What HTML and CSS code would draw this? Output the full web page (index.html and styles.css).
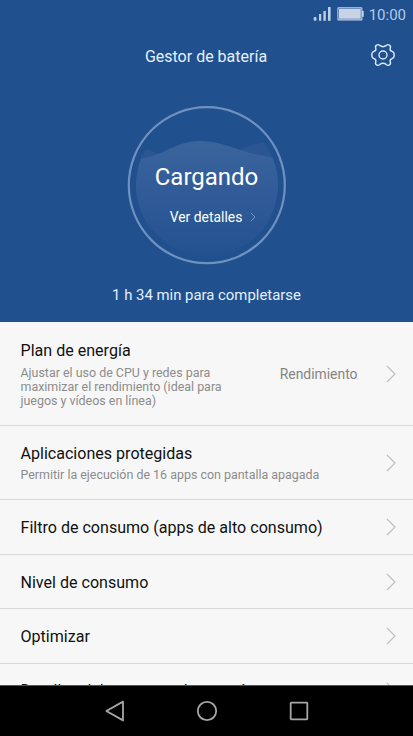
FILE: index.html
```html
<!DOCTYPE html>
<html lang="es">
<head>
    <meta charset="UTF-8">
    <meta name="viewport" content="width=device-width, initial-scale=1.0">
    <title>Gestor de batería</title>
    <link rel="stylesheet" href="styles.css">
</head>
<body>
    <div class="phone">
        <header class="header">
            <div class="status-bar">
                <svg class="signal" width="18" height="14" viewBox="0 0 18 14" fill="#bccde6">
                    <rect x="0.7" y="10" width="2.8" height="3.8" rx="1"/>
                    <rect x="6" y="7" width="2.2" height="6.8"/>
                    <rect x="10.4" y="4" width="2.4" height="9.8"/>
                    <rect x="15" y="0" width="2.6" height="13.8"/>
                </svg>
                <svg class="battery" width="27" height="14" viewBox="0 0 27 14">
                    <rect x="0.9" y="0.9" width="24" height="12" rx="0.5" fill="none" stroke="#c3d2e9" stroke-width="1.1"/>
                    <rect x="2" y="2" width="21.8" height="9.8" fill="#c8d3e8"/>
                    <rect x="25" y="4" width="1.7" height="5.8" fill="#c3d2e9"/>
                </svg>
                <span class="time">10:00</span>
            </div>
            <div class="title-bar">
                <h1>Gestor de batería</h1>
                <svg class="gear" width="26" height="26" viewBox="-13 -13 26 26" fill="none" stroke="#d7e8fb" stroke-width="1.4" stroke-linejoin="round">
                    <path d="M-3.4 -9.6 Q-4.6 -11 -6.4 -9.9 Q-8.2 -8.8 -7.2 -6.9 Q-6.6 -4.3 -9 -3.7 Q-11.2 -3 -11.2 0 Q-11.2 3 -9 3.7 Q-6.6 4.3 -7.2 6.9 Q-8.2 8.8 -6.4 9.9 Q-4.6 11 -3.4 9.6 Q0 7 3.4 9.6 Q4.6 11 6.4 9.9 Q8.2 8.8 7.2 6.9 Q6.6 4.3 9 3.7 Q11.2 3 11.2 0 Q11.2 -3 9 -3.7 Q6.6 -4.3 7.2 -6.9 Q8.2 -8.8 6.4 -9.9 Q4.6 -11 3.4 -9.6 Q0 -7 -3.4 -9.6 Z"/>
                    <circle r="4"/>
                </svg>
            </div>
            <div class="dial">
                <svg class="wave" width="160" height="160" viewBox="0 0 160 160">
                    <defs>
                        <linearGradient id="water" x1="0" y1="0" x2="0" y2="1">
                            <stop offset="0" stop-color="#3a649b"/>
                            <stop offset="0.45" stop-color="#305b98"/>
                            <stop offset="0.9" stop-color="#245290"/>
                            <stop offset="1" stop-color="#20508e"/>
                        </linearGradient>
                        <clipPath id="inner">
                            <circle cx="80" cy="80" r="71"/>
                        </clipPath>
                    </defs>
                    <g clip-path="url(#inner)">
                        <path d="M0 36 C20 44 50 58 75 58 C105 54 110 37 160 35 V90 H0 Z" fill="#2a5793"/>
                        <path d="M0 56 C38 53 45 36 74 36 C102 36 118 53 160 53 V160 H0 Z" fill="url(#water)"/>
                    </g>
                    <circle cx="79.8" cy="80.2" r="78" fill="none" stroke="#6f91c2" stroke-width="2.2"/>
                </svg>
                <div class="dial-text">
                    <div class="state">Cargando</div>
                    <div class="details">Ver detalles
                        <svg width="6" height="10" viewBox="0 0 6 10" fill="none" stroke="#7795be"><path d="M0.8 0.8 L5 5 L0.8 9.2"/></svg>
                    </div>
                </div>
            </div>
            <p class="remaining">1 h 34 min para completarse</p>
        </header>

        <main class="list">
            <div class="row row-plan">
                <div class="row-text">
                    <h2>Plan de energía</h2>
                    <p>Ajustar el uso de CPU y redes para<br>maximizar el rendimiento (ideal para<br>juegos y vídeos en línea)</p>
                </div>
                <span class="value">Rendimiento</span>
                <svg class="arrow" width="10" height="18" viewBox="0 0 10 18"><path d="M1 1 L9 9 L1 17"/></svg>
            </div>
            <div class="row row-apps">
                <div class="row-text">
                    <h2>Aplicaciones protegidas</h2>
                    <p>Permitir la ejecución de 16 apps con pantalla apagada</p>
                </div>
                <svg class="arrow" width="10" height="18" viewBox="0 0 10 18"><path d="M1 1 L9 9 L1 17"/></svg>
            </div>
            <div class="row">
                <h2>Filtro de consumo (apps de alto consumo)</h2>
                <svg class="arrow" width="10" height="18" viewBox="0 0 10 18"><path d="M1 1 L9 9 L1 17"/></svg>
            </div>
            <div class="row row-level">
                <h2>Nivel de consumo</h2>
                <svg class="arrow" width="10" height="18" viewBox="0 0 10 18"><path d="M1 1 L9 9 L1 17"/></svg>
            </div>
            <div class="row">
                <h2>Optimizar</h2>
                <svg class="arrow" width="10" height="18" viewBox="0 0 10 18"><path d="M1 1 L9 9 L1 17"/></svg>
            </div>
            <div class="row row-last">
                <h2>Detalles del consumo de energía</h2>
                <svg class="arrow" width="10" height="18" viewBox="0 0 10 18"><path d="M1 1 L9 9 L1 17"/></svg>
            </div>
        </main>

        <nav class="nav-bar">
            <svg width="20" height="22" viewBox="0 0 20 22"><path d="M1.4 11 L18 1.6 V20.4 Z"/></svg>
            <svg width="22" height="22" viewBox="0 0 22 22"><circle cx="11" cy="11" r="9.2"/></svg>
            <svg width="20" height="20" viewBox="0 0 20 20"><rect x="1.7" y="1.7" width="16.6" height="16.6" rx="0.5"/></svg>
        </nav>
    </div>
</body>
</html>
```

FILE: styles.css
```css
body {
    font-family: Roboto, Arial, sans-serif;
    margin: 0;
    background-color: #000;
}
h1, h2, p {
    margin: 0;
    font-weight: normal;
}
svg {
    display: block;
    flex-shrink: 0;
}
.phone {
    width: 413px;
    height: 736px;
    display: flex;
    flex-direction: column;
    overflow: hidden;
}
.header {
    height: 322px;
    flex-shrink: 0;
    background-color: #20508e;
    color: #e4f0ff;
}
.status-bar {
    height: 28px;
    padding-right: 7px;
    display: flex;
    justify-content: flex-end;
    align-items: center;
}
.battery {
    margin-left: 6px;
    margin-right: 5px;
}
.time {
    font-size: 15px;
    line-height: 28px;
    padding-top: 1px;
    color: #b5c9e6;
}
.title-bar {
    height: 54px;
    padding: 0 17px 0 16px;
    display: grid;
    grid-template-columns: 26px 1fr 26px;
    align-items: center;
}
.title-bar h1 {
    grid-column: 2;
    padding-top: 2px;
    text-align: center;
    font-size: 16px;
}
.dial {
    width: 160px;
    height: 160px;
    margin: 23px auto 0;
    display: grid;
}
.wave, .dial-text {
    grid-area: 1 / 1;
}
.dial-text {
    z-index: 1;
    padding-top: 57px;
    text-align: center;
    color: #fff;
}
.state {
    font-size: 24px;
    line-height: 30px;
}
.details {
    margin-top: 16px;
    padding-left: 13px;
    display: flex;
    justify-content: center;
    align-items: center;
    gap: 8px;
    font-size: 13.9px;
    line-height: 18px;
}
.remaining {
    margin-top: 20px;
    text-align: center;
    font-size: 14.9px;
    line-height: 20px;
}
.list {
    height: 363px;
    flex-shrink: 0;
    overflow: hidden;
    background-color: #f7f7f7;
}
.row {
    height: 54.5px;
    box-sizing: border-box;
    padding: 0 17px 0 20.5px;
    display: flex;
    align-items: center;
    justify-content: space-between;
    border-bottom: 1px solid #d9d9d9;
}
.row-plan {
    height: 104px;
}
.row-plan .row-text {
    padding-top: 1px;
}
.row-apps {
    height: 74px;
}
.row-level {
    padding-top: 1px;
}
.row-last {
    height: 56.5px;
}
.row h2 {
    padding-top: 2px;
    font-size: 16.07px;
    line-height: 20px;
    color: #111;
}
.row-last h2 {
    padding-top: 0;
}
.row p {
    margin-top: 4.5px;
    font-size: 12.45px;
    line-height: 14.4px;
    color: #8c8c8c;
    white-space: nowrap;
}
.row-apps p {
    margin-top: 4px;
}
.value {
    margin-left: auto;
    margin-right: 28.5px;
    font-size: 13.9px;
    color: #858585;
}
.arrow {
    fill: none;
    stroke: #bdbdbd;
    stroke-width: 1.1;
}
.nav-bar {
    height: 51px;
    box-sizing: border-box;
    border-top: 1px solid #555;
    background-color: #000;
    display: flex;
    justify-content: center;
    align-items: center;
    gap: 71px;
}
.nav-bar svg {
    fill: none;
    stroke: #a6a6a6;
    stroke-width: 1.8;
    stroke-linejoin: round;
}
```
